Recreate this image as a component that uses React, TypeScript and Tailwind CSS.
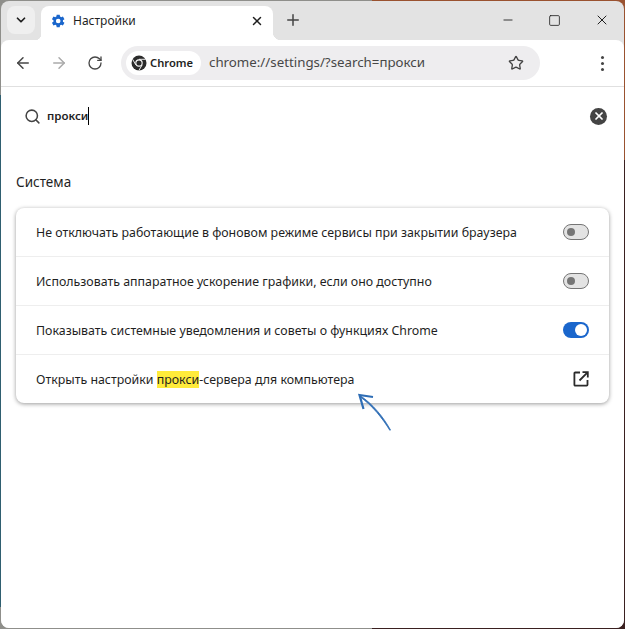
import { ArrowLeft, ArrowRight, ChevronDown, Minus, Plus, RotateCw, Search, Square, Star, X } from "lucide-react";

const rows = ["Не отключать работающие в фоновом режиме сервисы при закрытии браузера", "Использовать аппаратное ускорение графики, если оно доступно", "Показывать системные уведомления и советы о функциях Chrome"];

const Toggle = ({ on }: { on?: boolean }) =>
    on ? (
        <div className="flex h-4 w-[26px] items-center justify-end rounded-full bg-[#1a66cc] pr-[2px]">
            <div className="h-3 w-3 rounded-full bg-white" />
        </div>
    ) : (
        <div className="flex h-4 w-[26px] items-center rounded-full border border-[#757575] bg-[#e3e3e3] pl-[3px]">
            <div className="h-2 w-2 rounded-full bg-[#757575]" />
        </div>
    );

const GearIcon = () => (
    <svg width="16" height="16" viewBox="0 0 24 24" fill="#1a66cc">
        <path
            fillRule="evenodd"
            d="M19.4 13a7.6 7.6 0 0 0 0-2l2.3-1.8-2.3-4-2.7 1.1a7.6 7.6 0 0 0-1.7-1L14.6 2.5h-4.6l-.4 2.8a7.6 7.6 0 0 0-1.7 1L5.200 5.200l-2.300 4L5.200 11a7.600 7.600 0 0 0 0 2l-2.300 1.800 2.300 4 2.700-1.100a7.600 7.600 0 0 0 1.700 1l.4 2.800h4.600l.4-2.800a7.600 7.600 0 0 0 1.700-1l2.700 1.100 2.300-4zM12.300 15.500a3.500 3.500 0 1 1 0-7 3.500 3.500 0 0 1 0 7z"
        />
    </svg>
);

const ChromeLogo = () => (
    <svg width="16" height="16" viewBox="0 0 16 16">
        <circle cx="8" cy="8" r="7.5" fill="#2b2b2b" />
        <circle cx="8" cy="8" r="3.700" fill="white" />
        <circle cx="8" cy="8" r="2.600" fill="#2b2b2b" />
        <path d="M8 4.300h6.600M4.800 9.900 1.700 4.400M11.200 9.900 7.900 15.400" stroke="white" strokeWidth="0.9" fill="none" />
    </svg>
);

const OpenIcon = () => (
    <svg width="16" height="16" viewBox="0 0 16 16" fill="none" stroke="#2b2b2b" strokeWidth="1.800">
        <path d="M7 1.500H2.200a.8.8 0 0 0-.8.8v11.500a.8.8 0 0 0 .8.8h11.500a.8.8 0 0 0 .8-.8V9" />
        <path d="M9.500 1.200h5.300v5.300M14.800 1.200 6.500 9.500" />
    </svg>
);

const App = () => {
    return (
        <div className="h-[629px] w-[625px] overflow-hidden pt-[1px] pr-[1px] pb-[1px] pl-[1px] font-['Noto_Sans','Open_Sans',sans-serif] text-[#1f1f1f] [background:linear-gradient(#2f5f70,#2f5f70)_0_95px/2px_512px_no-repeat,linear-gradient(#9a5230,#9a5230)_100%_0/253px_160px_no-repeat,linear-gradient(90deg,#8f8f8b_372px,#3a2020_372px)]">
            <div className="flex h-full flex-col overflow-hidden rounded-[8px] bg-[#e3e3e3]">
                <div className="flex h-[39px] shrink-0">
                    <div className="mt-[5px] ml-[6px] flex h-7 w-7 items-center justify-center rounded-lg bg-[#efefef]">
                        <ChevronDown size={14} strokeWidth={3} />
                    </div>
                    <div className="h-[6px] w-[6px] self-end bg-[radial-gradient(circle_at_0_0,transparent_6px,white_6.500px)]" />
                    <div className="mt-[5px] flex h-[34px] w-[232px] items-center rounded-t-lg bg-white pr-[9px] pb-[4px] pl-[9px]">
                        <GearIcon />
                        <span className="ml-[7px] flex-1 text-xs">Настройки</span>
                        <X size={14} strokeWidth={2.500} />
                    </div>
                    <div className="h-[8px] w-[8px] self-end bg-[radial-gradient(circle_at_100%_0,transparent_8px,white_8.500px)]" />
                    <div className="mt-[5px] ml-[3px] flex h-7 items-center">
                        <Plus size={18} strokeWidth={2} color="#444" />
                    </div>
                    <div className="mt-[5px] ml-auto flex h-7 items-center gap-[33px] pr-[14px]">
                        <Minus size={14} strokeWidth={1.500} />
                        <Square size={13} strokeWidth={1.500} />
                        <X size={16} strokeWidth={1.500} />
                    </div>
                </div>
                <div className="flex flex-1 flex-col rounded-t-[8px] bg-white">
                    <div className="flex h-[47px] shrink-0 items-center border-b border-[#e0e0e0] pl-[13px]">
                        <ArrowLeft size={18} color="#474747" />
                        <ArrowRight size={18} color="#aaaaaa" className="ml-[18px]" />
                        <RotateCw size={16} color="#474747" className="ml-[19px]" />
                        <div className="ml-[18px] flex h-[34px] w-[419px] items-center rounded-full bg-[#eeedef] pl-[5px]">
                            <div className="flex h-6 w-[75px] items-center rounded-full bg-white pl-[5px]">
                                <ChromeLogo />
                                <span className="ml-[3px] text-[11.200px] font-semibold">Chrome</span>
                            </div>
                            <span className="ml-[8px] flex-1 text-[13.300px] text-[#474747]">chrome://settings/?search=прокси</span>
                            <Star size={16} color="#444" strokeWidth={2} className="mr-[16px]" />
                        </div>
                        <div className="ml-[61px] flex flex-col gap-[3px]">
                            <div className="h-[3px] w-[3px] rounded-full bg-[#444]" />
                            <div className="h-[3px] w-[3px] rounded-full bg-[#444]" />
                            <div className="h-[3px] w-[3px] rounded-full bg-[#444]" />
                        </div>
                    </div>
                    <div className="flex flex-1 flex-col px-[15px]">
                        <div className="mt-[19px] flex h-5 items-center pr-[2px] pl-[8px]">
                            <Search size={17} color="#444" strokeWidth={2.200} />
                            <span className="ml-[6px] border-r border-black text-[11.500px] font-semibold">прокси</span>
                            <div className="ml-auto flex h-[17px] w-[17px] items-center justify-center rounded-full bg-[#444]">
                                <X size={12} color="white" strokeWidth={3.500} />
                            </div>
                        </div>
                        <div className="mt-[46px] text-[13.500px]">Система</div>
                        <div className="mt-[16px] w-[593px] rounded-lg bg-white shadow-[0_1px_4px_rgba(0,0,0,0.4)]">
                            {rows.map((x, index) => (
                                <div key={index} className="flex h-[49px] items-center border-b border-[#eeeeee] pr-5 pl-5 text-[12.380px]">
                                    <span className="flex-1 pt-[2px]">{x}</span>
                                    <Toggle on={index === 2} />
                                </div>
                            ))}
                            <div className="flex h-[48px] items-center pr-5 pl-5 text-[12.380px]">
                                <span className="flex-1 pt-[2px]">
                                    Открыть настройки <span className="bg-[#ffeb3b]">прокси</span>-сервера для компьютера
                                </span>
                                <OpenIcon />
                            </div>
                        </div>
                        <svg width="36" height="42" viewBox="0 0 36 42" fill="none" className="mt-[-13px] ml-[341px]">
                            <path d="M33.500 40C27 28 16 14 3 5.500L2.500 6.500C15 15 26 29 32.800 40.300z" fill="#2e6db5" stroke="#2e6db5" strokeWidth="0.800" />
                            <path d="M6.500 19 2.500 5 16 7" stroke="#2e6db5" strokeWidth="2.200" />
                        </svg>
                    </div>
                </div>
            </div>
        </div>
    );
};

export default App;
